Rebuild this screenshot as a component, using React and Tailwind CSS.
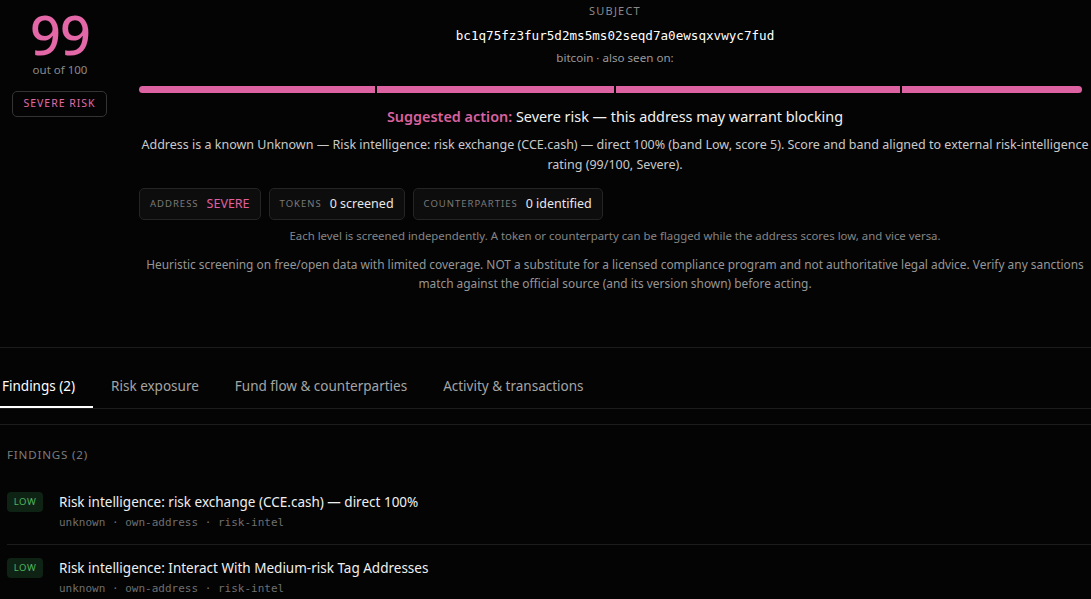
import { useState } from "react";

const segments = [238, 238, 286, 181];

const levels = [
  { label: "Address", value: "SEVERE", tone: "text-[#e0609f]" },
  { label: "Tokens", value: "0 screened", tone: "text-[#e8e8e8]" },
  { label: "Counterparties", value: "0 identified", tone: "text-[#e8e8e8]" },
];

const tabs = ["Findings (2)", "Risk exposure", "Fund flow & counterparties", "Activity & transactions"];

const findings = [
  { title: "Risk intelligence: risk exchange (CCE.cash) — direct 100%", meta: "unknown · own-address · risk-intel" },
  { title: "Risk intelligence: Interact With Medium-risk Tag Addresses", meta: "unknown · own-address · risk-intel" },
];

function ScoreBar() {
  // band segments, all filled since the score is 99
  return (
    <div className="flex gap-[2px] mr-[9px] h-[7px]">
      {segments.map((w, i) => (
        <div
          key={i}
          className={`h-full bg-[#dc62a2] ${i === 0 ? "rounded-l-full" : ""} ${i === segments.length - 1 ? "rounded-r-full" : ""}`}
          style={{ flexGrow: w, flexBasis: 0 }}
        />
      ))}
    </div>
  );
}

export default function App() {
  const [tab, setTab] = useState(0);

  return (
    <div className="min-h-[599px] bg-[#040404] text-[#e8e8e8] overflow-hidden font-['Noto_Sans',sans-serif]">
      {/* summary header */}
      <div className="flex">
        <div className="w-[120px] shrink-0 flex flex-col items-center pt-[4px]">
          <div className="text-[54px] leading-[60px] font-medium text-[#e468a8] tracking-[-1px]">99</div>
          <div className="text-[11.5px] leading-[14px] text-[#8a8a8a] -mt-[1px]">out of 100</div>
          <div className="mt-[14px] ml-[-1px] border border-[#333] rounded-[5px] px-[10px] h-[26px] flex items-center text-[10.5px] tracking-[1px] text-[#e06aa6]">
            SEVERE RISK
          </div>
        </div>

        <div className="flex-1 ml-[19px] flex flex-col items-stretch text-center">
          <div className="text-[11px] leading-[14px] tracking-[1.2px] text-[#8a8a8a] pt-[4px]">SUBJECT</div>
          <div className="mt-[10px] text-[12.6px] leading-[16px] font-['DejaVu_Sans_Mono',monospace] text-white">
            bc1q75fz3fur5d2ms5ms02seqd7a0ewsqxvwyc7fud
          </div>
          <div className="mt-[6px] text-[11.6px] leading-[16px] text-[#9a9a9a]">bitcoin · also seen on:</div>
          <div className="mt-[20px]">
            <ScoreBar />
          </div>
          <div className="mt-[14px] text-[14.4px] leading-[20px] text-[#f2f2f2]">
            <span className="font-semibold text-[#d9629f]">Suggested action:</span> Severe risk — this address may warrant blocking
          </div>
          <p className="mt-[8px] text-[12.5px] leading-[20px] text-[#c9c9c9]">
            Address is a known Unknown — Risk intelligence: risk exchange (CCE.cash) — direct 100% (band Low, score 5). Score and band aligned to external risk-intelligence rating (99/100, Severe).
          </p>

          <div className="mt-[13px] flex gap-[8px] text-left">
            {levels.map((l) => (
              <div key={l.label} className="h-[32px] flex items-center gap-[8px] px-[10px] bg-[#0d0d0d] border border-[#242424] rounded-[5px]">
                <span className="text-[9.5px] tracking-[1px] uppercase text-[#7a7a7a]">{l.label}</span>
                <span className={`text-[12.5px] ${l.tone}`}>{l.value}</span>
              </div>
            ))}
          </div>

          <p className="mt-[8px] text-[11.4px] leading-[16px] text-[#858585]">
            Each level is screened independently. A token or counterparty can be flagged while the address scores low, and vice versa.
          </p>
          <p className="mt-[11px] text-[11.9px] leading-[19px] text-[#969696] px-[2px]">
            Heuristic screening on free/open data with limited coverage. NOT a substitute for a licensed compliance program and not authoritative legal advice. Verify any sanctions match against the official source (and its version shown) before acting.
          </p>
        </div>
      </div>

      {/* tabs */}
      <div className="mt-[54px] border-t border-[#1c1c1c]">
        <div className="flex border-b border-[#1c1c1c] -ml-[16px]">
          {tabs.map((t, i) => (
            <button
              key={t}
              type="button"
              onClick={() => setTab(i)}
              className={`px-[18px] pt-[28px] pb-[10px] text-[13.5px] leading-[20px] border-b-2 ${
                tab === i ? "text-white border-white" : "text-[#a5a5a5] border-transparent"
              }`}
            >
              {t}
            </button>
          ))}
        </div>

        <div className="mt-[15px] border-t border-[#1c1c1c] pl-[7px] pt-[22px]">
          <div className="text-[11.6px] leading-[16px] tracking-[0.8px] text-[#7c7c7c]">FINDINGS (2)</div>
          <div className="mt-[29px]">
            {findings.map((f, i) => (
              <div key={i} className={`flex gap-[16px] ${i > 0 ? "border-t border-[#1c1c1c] pt-[13px]" : ""} pb-[14px]`}>
                <div className="h-[20px] w-[36px] shrink-0 rounded-[4px] bg-[#0f2315] flex items-center justify-center text-[9.5px] tracking-[0.5px] text-[#4fb45f]">
                  LOW
                </div>
                <div>
                  <div className="text-[13.5px] leading-[20px] text-[#f0f0f0]">{f.title}</div>
                  <div className="mt-[4px] text-[11px] leading-[14px] font-['DejaVu_Sans_Mono',monospace] text-[#6f6f6f]">{f.meta}</div>
                </div>
              </div>
            ))}
          </div>
        </div>
      </div>
    </div>
  );
}
